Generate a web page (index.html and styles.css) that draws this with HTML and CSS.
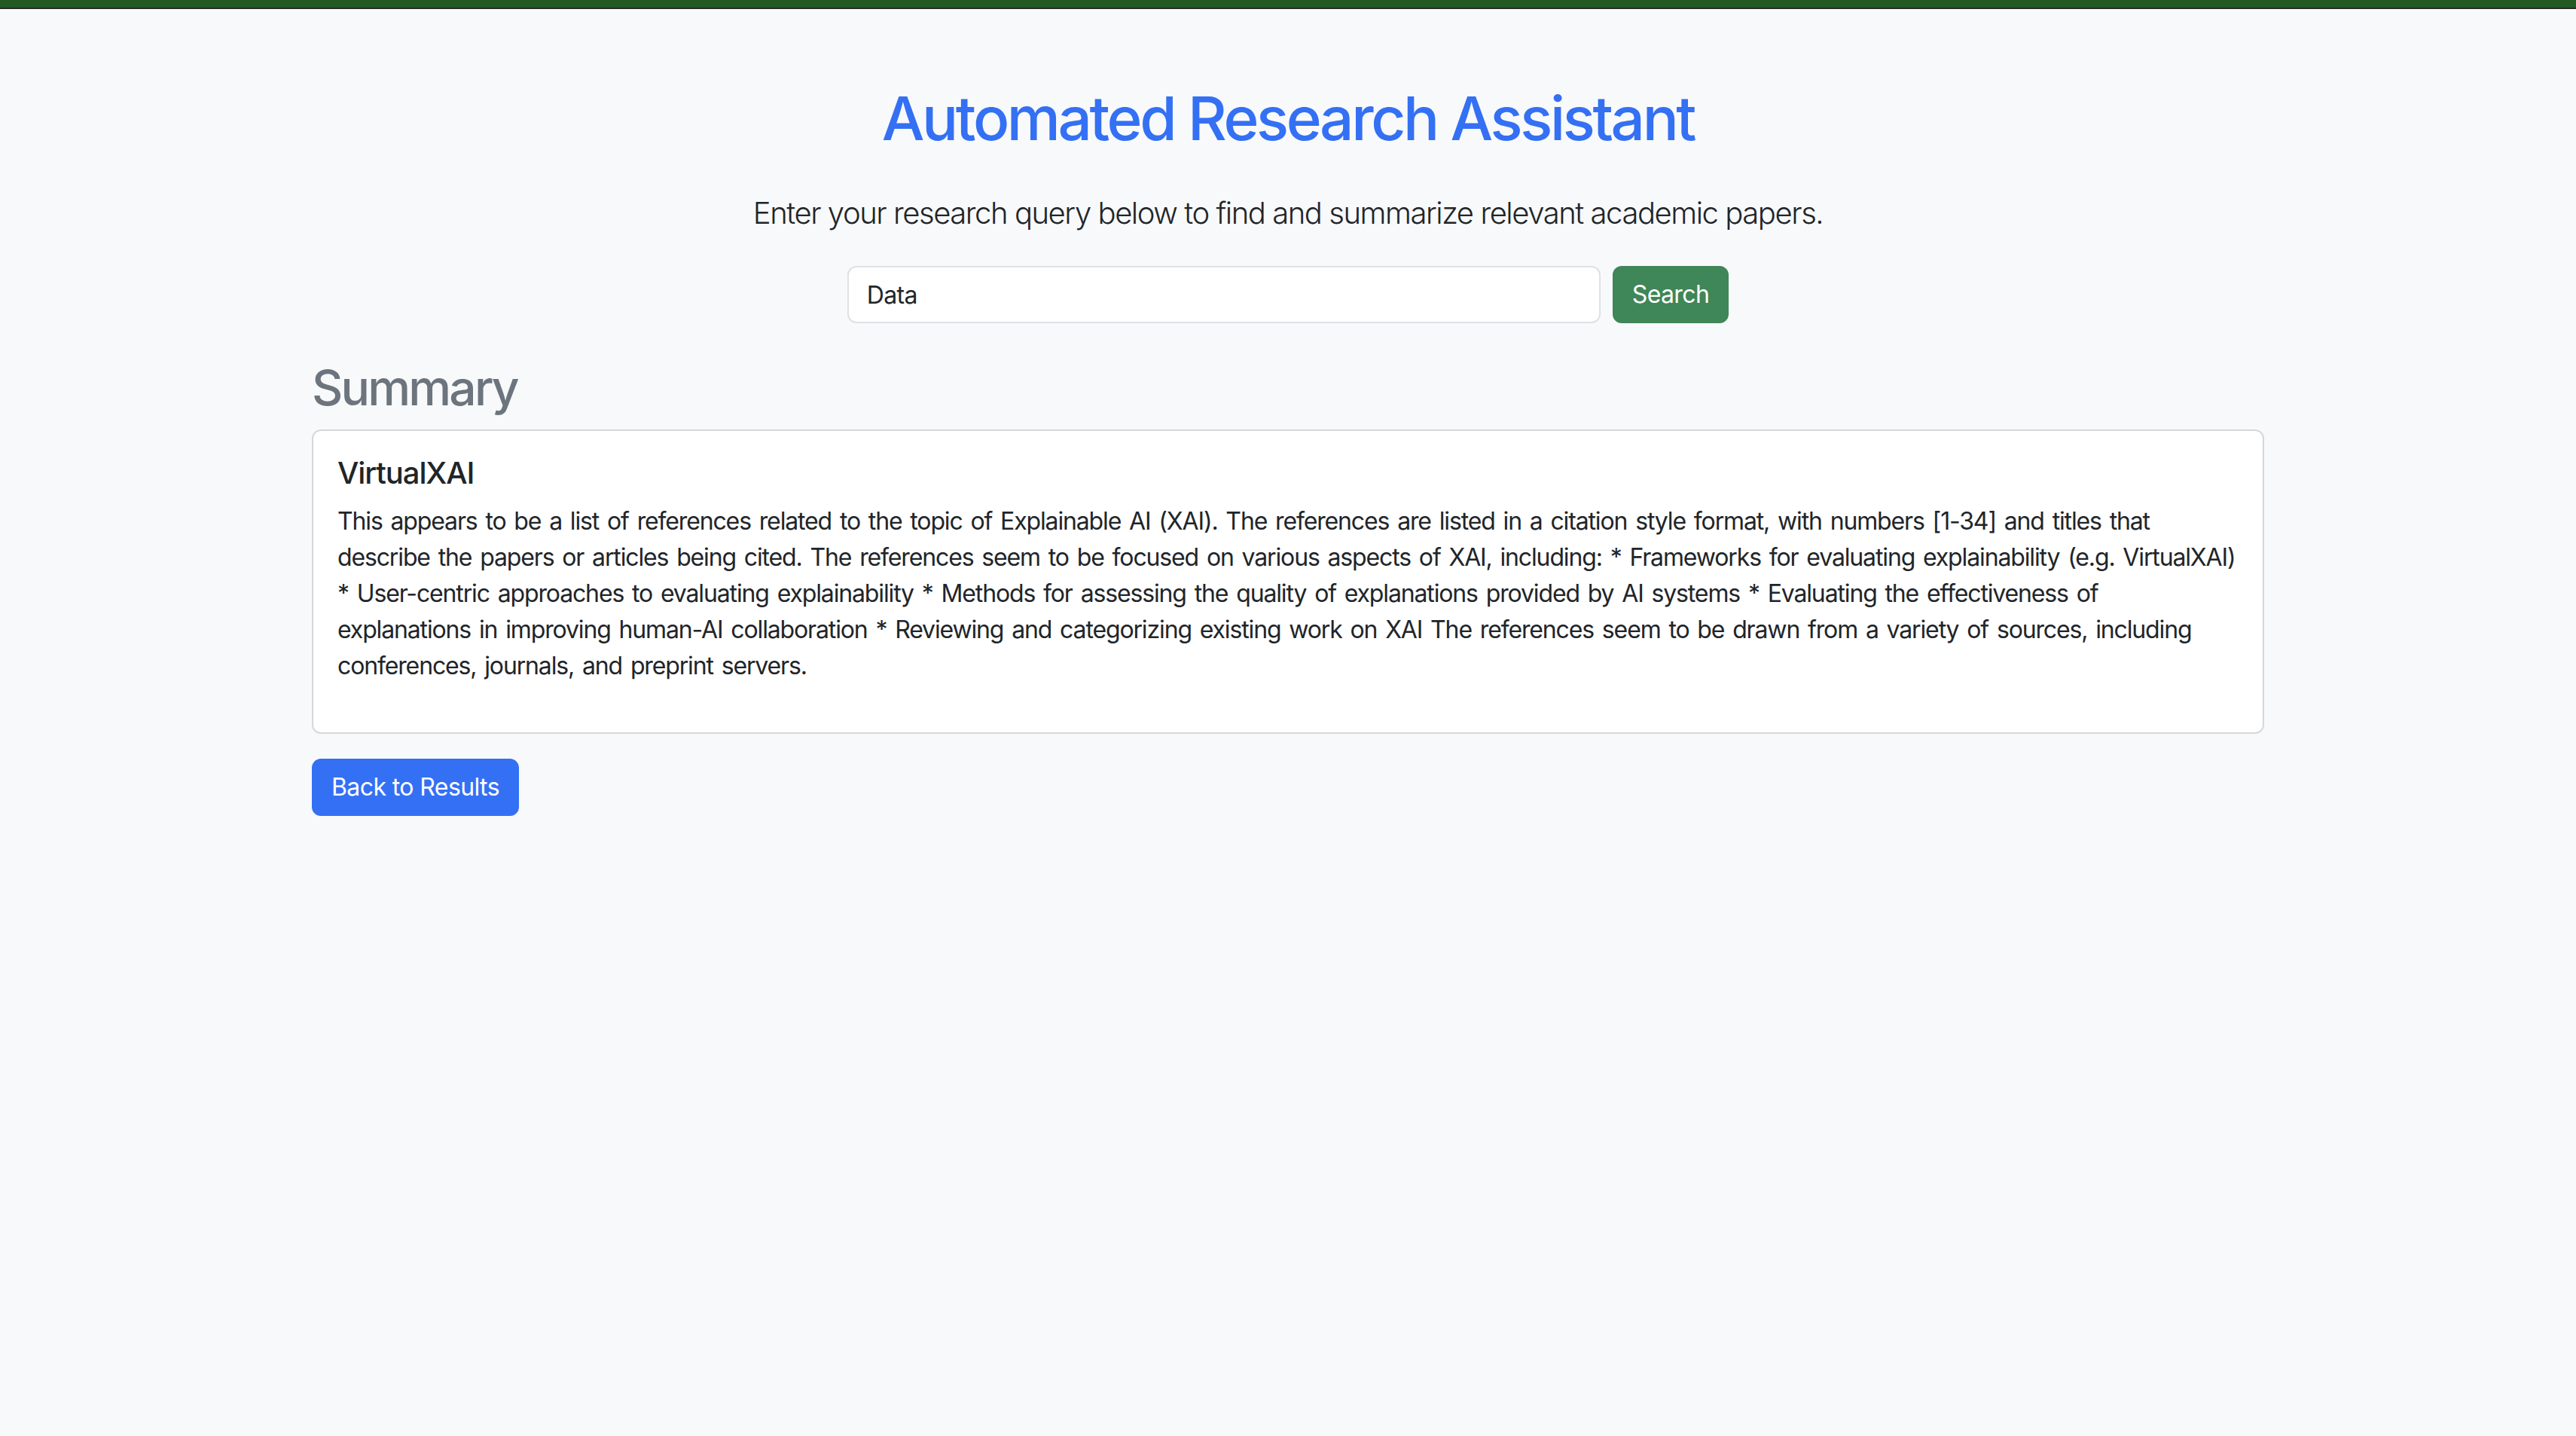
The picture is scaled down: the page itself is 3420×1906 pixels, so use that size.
FILE: index.html
```html
<!DOCTYPE html>
<html lang="en">
<head>
<meta charset="utf-8">
<title>Automated Research Assistant</title>
<link rel="stylesheet" href="styles.css">
</head>
<body>
<div class="topbar"></div>
<div class="container">
  <h1 class="title">Automated Research Assistant</h1>
  <p class="lead">Enter your research query below to find and summarize relevant academic papers.</p>
  <form class="search-form">
    <input class="search-input" type="text" value="Data">
    <button class="btn btn-success" type="button">Search</button>
  </form>
  <h2 class="section-title">Summary</h2>
  <div class="card">
    <div class="card-body">
      <h5 class="card-title">VirtualXAI</h5>
      <p class="card-text">This appears to be a list of references related to the topic of Explainable AI (XAI). The references are listed in a citation style format, with numbers [1-34] and titles that describe the papers or articles being cited. The references seem to be focused on various aspects of XAI, including: * Frameworks for evaluating explainability (e.g. VirtualXAI) * User-centric approaches to evaluating explainability * Methods for assessing the quality of explanations provided by AI systems * Evaluating the effectiveness of explanations in improving human-AI collaboration * Reviewing and categorizing existing work on XAI The references seem to be drawn from a variety of sources, including conferences, journals, and preprint servers.</p>
    </div>
  </div>
  <button class="btn btn-primary back-btn" type="button">Back to Results</button>
</div>
</body>
</html>
```

FILE: styles.css
```css
* { box-sizing: border-box; }
html, body { margin: 0; padding: 0; }
body {
  background: #f8f9fa;
  color: #212529;
  font-family: Inter, "Noto Sans", "Liberation Sans", sans-serif;
  font-size: 32px;
  line-height: 1.5;
}
.topbar {
  height: 12px;
  background: #245a24;
  border-bottom: 2px solid #282a28;
}
.container {
  max-width: 2640px;
  margin: 0 auto;
  padding: 0 24px;
  padding-top: 97px;
}
.title {
  margin: 0 0 48px;
  text-align: center;
  font-size: 80px;
  font-weight: 500;
  line-height: 1.2;
  letter-spacing: -3.4px;
  color: #3470f4;
}
.lead {
  margin: 0 0 40px;
  text-align: center;
  font-size: 40px;
  font-weight: 300;
  line-height: 1.5;
  letter-spacing: -1.45px;
}
.search-form {
  display: flex;
  justify-content: center;
  gap: 16px;
  margin: 0;
}
.search-input {
  width: 1000px;
  height: 76px;
  padding: 12px 24px;
  font: inherit;
  font-size: 32px;
  letter-spacing: -0.6px;
  color: #212529;
  background: #fff;
  border: 2px solid #dee2e6;
  border-radius: 12px;
  outline: none;
}
.btn {
  height: 76px;
  padding: 12px 24px;
  font: inherit;
  font-size: 32px;
  line-height: 1.5;
  letter-spacing: -0.6px;
  color: #fff;
  border: 2px solid transparent;
  border-radius: 12px;
  cursor: pointer;
}
.btn-success { background: #3f8658; border-color: #3f8658; }
.btn-primary { background: #3470f4; border-color: #3470f4; }
.section-title {
  margin: 48px 0 16px;
  font-size: 64px;
  font-weight: 500;
  line-height: 1.2;
  letter-spacing: -2.8px;
  color: #6c757d;
}
.card {
  background: #fff;
  border: 2px solid #d6d7d8;
  border-radius: 12px;
}
.card-body { padding: 32px; }
.card-title {
  margin: 0 0 16px;
  font-size: 40px;
  font-weight: 500;
  line-height: 1.2;
  letter-spacing: -1.1px;
}
.card-text {
  margin: 0 0 32px;
  letter-spacing: -1.14px;
  word-spacing: 3px;
}
.back-btn { margin-top: 33px; }
```
